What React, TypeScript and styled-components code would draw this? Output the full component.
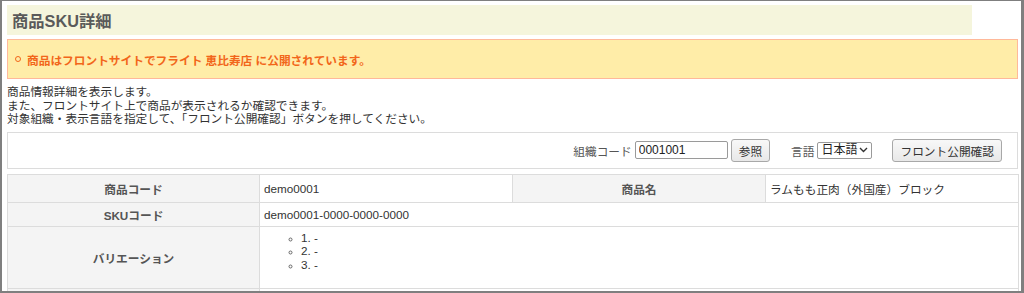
import React from "react";
import styled, { createGlobalStyle } from "styled-components";

const GlobalStyle = createGlobalStyle`
  html, body { margin: 0; padding: 0; background: #fff; }
  body {
    font-family: "Liberation Sans", Arial, "Noto Sans CJK JP", sans-serif;
    font-size: 11.7px;
    color: #333;
  }
  * { box-sizing: border-box; }
`;

const Frame = styled.div`
  width: 1024px;
  height: 293px;
  overflow: hidden;
  border-style: solid;
  border-color: #7f7f7f;
  border-width: 1px 3px 2px 2px;
  padding: 4px 3px 0 5px;
`;

const TitleBar = styled.h1`
  margin: 0 46px 0 0;
  height: 30px;
  background: #f5f5dc;
  color: #5a5a5a;
  font-size: 16.3px;
  font-weight: bold;
  display: flex;
  align-items: center;
  padding-left: 5px;
`;

const Alert = styled.ul`
  margin: 4px 0 0 0;
  height: 40px;
  background: #ffeda8;
  border: 1px solid #ffb99a;
  list-style: none;
  padding: 0 0 0 7px;
  display: flex;
  align-items: center;
`;

const AlertItem = styled.li`
  display: flex;
  align-items: center;
  gap: 6px;
  color: #f2661a;
  font-weight: bold;
`;

const HollowDot = styled.span`
  width: 6px;
  height: 6px;
  border: 1px solid #f2661a;
  border-radius: 50%;
`;

const Description = styled.p`
  margin: 6px 0 0 0;
  line-height: 13.5px;
  color: #333;
`;

const FormBox = styled.div`
  margin-top: 6px;
  height: 37px;
  border: 1px solid #dcdcdc;
  display: flex;
  align-items: center;
  justify-content: flex-end;
  padding-right: 15px;
`;

const Label = styled.span`
  color: #555;
  margin-right: 3px;
`;

const TextInput = styled.input`
  width: 93px;
  height: 18px;
  border: 1px solid #9a9a9a;
  border-radius: 2px;
  padding: 0 3px;
  font: inherit;
  font-size: 12px;
  color: #222;
`;

const Button = styled.button<{ $ml?: number }>`
  height: 23px;
  margin-left: ${(p) => p.$ml ?? 3}px;
  padding: 0 7px;
  border: 1px solid #a8a8a8;
  border-radius: 3px;
  background: linear-gradient(#f8f8f8, #e8e8e8);
  color: #333;
  font: inherit;
`;

const LangGroup = styled.span`
  display: flex;
  align-items: center;
  margin-left: 21px;
`;

const SelectWrap = styled.span`
  position: relative;
  display: inline-flex;
`;

const Select = styled.select`
  appearance: none;
  width: 55px;
  height: 17px;
  border: 1px solid #9a9a9a;
  border-radius: 2px;
  padding: 0 0 0 3px;
  font: inherit;
  font-size: 12px;
  color: #222;
  background: #fff;
  line-height: 15px;
`;

const Chevron = styled.svg`
  position: absolute;
  right: 4px;
  top: 5px;
  pointer-events: none;
`;

const Table = styled.table`
  margin-top: 5px;
  width: 1011px;
  border-collapse: collapse;
  table-layout: fixed;
`;

const Th = styled.th<{ $h: number }>`
  height: ${(p) => p.$h}px;
  background: #f4f4f4;
  border: 1px solid #dcdcdc;
  color: #555;
  font-weight: bold;
  text-align: center;
  vertical-align: middle;
  padding: 0 4px;
`;

const Td = styled.td<{ $top?: boolean }>`
  border: 1px solid #dcdcdc;
  color: #333;
  text-align: left;
  vertical-align: ${(p) => (p.$top ? "top" : "middle")};
  padding: ${(p) => (p.$top ? "4px 4px" : "0 4px")};
`;

const VariationList = styled.ul`
  margin: 0;
  padding-left: 37px;
  list-style: circle;
  line-height: 13.5px;
  li::marker { font-size: 9px; color: #666; }
`;

export default function App() {
  return (
    <>
      <GlobalStyle />
      <Frame>
        <TitleBar>商品SKU詳細</TitleBar>
        <Alert>
          <AlertItem>
            <HollowDot />
            商品はフロントサイトでフライト 恵比寿店 に公開されています。
          </AlertItem>
        </Alert>
        <Description>
          商品情報詳細を表示します。
          <br />
          また、フロントサイト上で商品が表示されるか確認できます。
          <br />
          対象組織・表示言語を指定して、「フロント公開確認」ボタンを押してください。
        </Description>
        <FormBox>
          <Label>組織コード</Label>
          <TextInput defaultValue="0001001" />
          <Button>参照</Button>
          <LangGroup>
            <Label>言語</Label>
            <SelectWrap>
              <Select defaultValue="ja">
                <option value="ja">日本語</option>
              </Select>
              <Chevron width="9" height="6" viewBox="0 0 9 6">
                <path d="M1 1 L4.5 4.5 L8 1" fill="none" stroke="#333" strokeWidth="1.4" />
              </Chevron>
            </SelectWrap>
          </LangGroup>
          <Button $ml={20}>フロント公開確認</Button>
        </FormBox>
        <Table>
          <colgroup>
            <col style={{ width: 252 }} />
            <col style={{ width: 253 }} />
            <col style={{ width: 253 }} />
            <col style={{ width: 253 }} />
          </colgroup>
          <tbody>
            <tr>
              <Th $h={28}>商品コード</Th>
              <Td>demo0001</Td>
              <Th $h={28}>商品名</Th>
              <Td>ラムもも正肉（外国産）ブロック</Td>
            </tr>
            <tr>
              <Th $h={24}>SKUコード</Th>
              <Td colSpan={3}>demo0001-0000-0000-0000</Td>
            </tr>
            <tr>
              <Th $h={62}>バリエーション</Th>
              <Td colSpan={3} $top>
                <VariationList>
                  <li>1. -</li>
                  <li>2. -</li>
                  <li>3. -</li>
                </VariationList>
              </Td>
            </tr>
            <tr>
              <Th $h={28}>&nbsp;</Th>
              <Td colSpan={3}>&nbsp;</Td>
            </tr>
          </tbody>
        </Table>
      </Frame>
    </>
  );
}
